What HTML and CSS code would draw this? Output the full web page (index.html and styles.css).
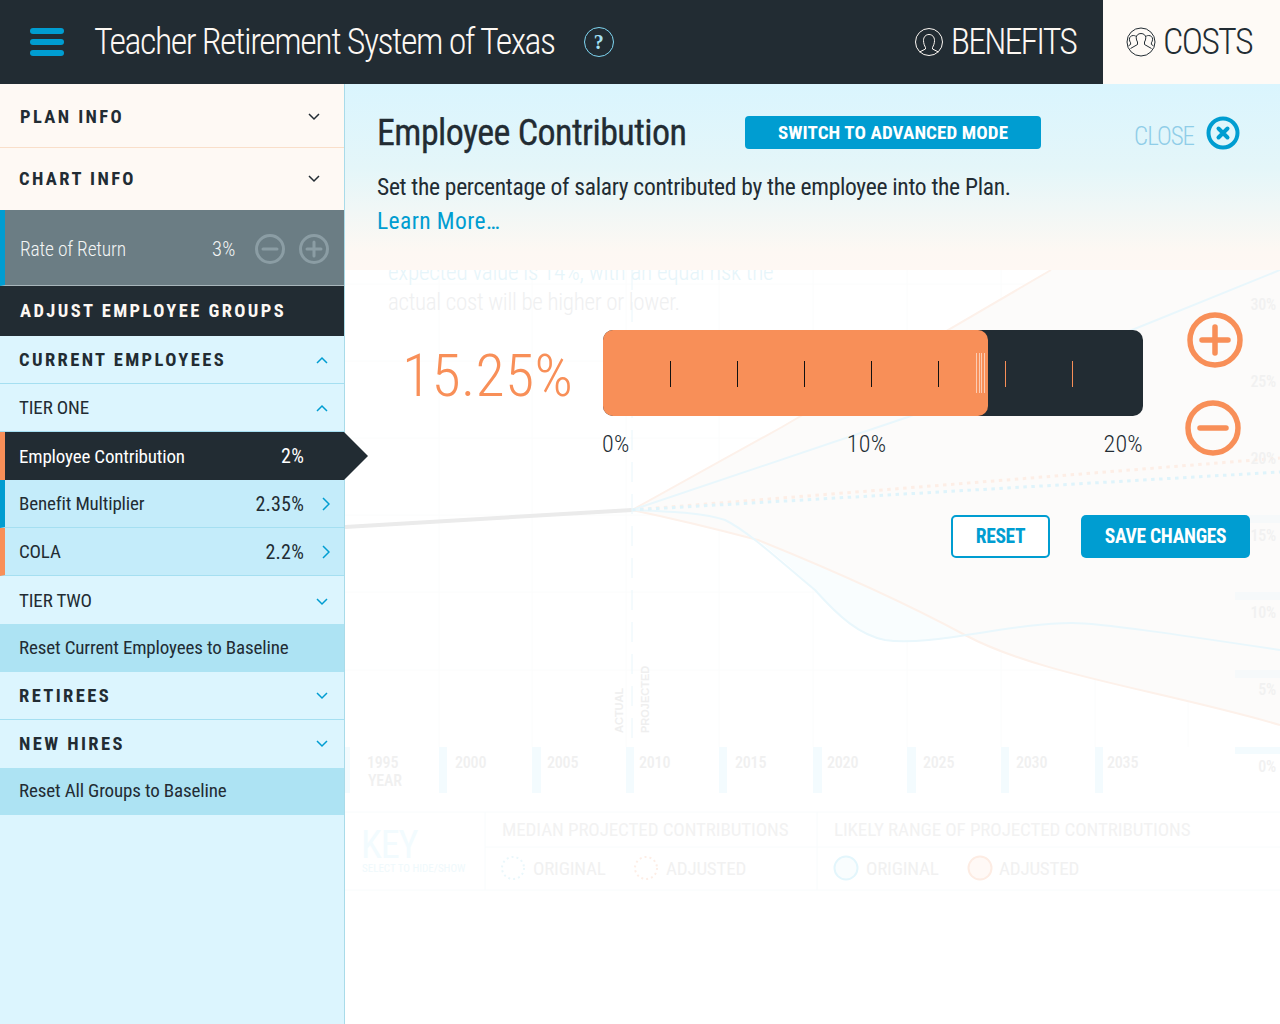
FILE: index.html
```html
<!DOCTYPE html>
<html lang="en">
<head>
<meta charset="utf-8">
<title>Teacher Retirement System of Texas</title>
<link rel="stylesheet" href="styles.css">
</head>
<body>
<header class="topbar">
  <div class="burger"><span></span><span></span><span></span></div>
  <h1 class="brand">Teacher Retirement System of Texas</h1>
  <div class="help">?</div>
  <div class="topbar-space"></div>
  <div class="tab tab-benefits">
    <svg class="tab-icon" viewBox="0 0 28 28"><circle cx="14" cy="14" r="13.500"/><path d="M10.500 19.500c-1-2-2-4-2-7 0-3.500 2.200-6 5.500-6s5.500 2.500 5.500 6c0 3-1 5-2 7v1.500l6 3M10.500 19.500v1.500l-6 3"/></svg>
    <span>BENEFITS</span>
  </div>
  <div class="tab tab-costs">
    <svg class="tab-icon" viewBox="0 0 30 30"><circle cx="15" cy="15" r="14"/><path d="M11.500 15c-.8-1.300-1.300-2.700-1.300-4.200 0-2.500 2-4.300 4.800-4.300s4.800 1.800 4.800 4.300c0 1.500-.5 2.900-1.300 4.200v2.500l7 4M11.500 15v2.500l-7 4M9.800 9.200C9 8.700 8.200 8.500 7.300 8.500c-2.300 0-3.900 1.600-3.900 3.700 0 1.400.5 2.600 1.200 3.600v1.700l-2 1.200M20.200 9.200c.8-.5 1.600-.7 2.500-.7 2.300 0 3.900 1.600 3.900 3.700 0 1.400-.5 2.600-1.200 3.600v1.700l2 1.200"/></svg>
    <span>COSTS</span>
  </div>
</header>
<div class="layout">
  <aside class="side">
    <div class="row cream cream-line plan"><span class="head">PLAN INFO</span><svg class="chev dark" viewBox="0 0 12 8"><path d="M1 1l5 5 5-5"/></svg></div>
    <div class="row cream chart-info"><span class="head">CHART INFO</span><svg class="chev dark" viewBox="0 0 12 8"><path d="M1 1l5 5 5-5"/></svg></div>
    <div class="rate">
      <span class="rate-label">Rate of Return</span>
      <span class="rate-val">3%</span>
      <svg class="rate-btn" viewBox="0 0 32 32"><circle cx="16" cy="16" r="13.500"/><path d="M9 16h14"/></svg>
      <svg class="rate-btn" viewBox="0 0 32 32"><circle cx="16" cy="16" r="13.500"/><path d="M9 16h14M16 9v14"/></svg>
    </div>
    <div class="adjust">ADJUST EMPLOYEE GROUPS</div>
    <div class="row lined"><span class="head">CURRENT EMPLOYEES</span><svg class="chev blue" viewBox="0 0 12 8"><path d="M1 7l5-5 5 5"/></svg></div>
    <div class="row lined"><span class="sub">TIER ONE</span><svg class="chev blue" viewBox="0 0 12 8"><path d="M1 7l5-5 5 5"/></svg></div>
    <div class="item active"><span class="item-label">Employee Contribution</span><span class="item-val">2%</span></div>
    <div class="item mark-blue"><span class="item-label">Benefit Multiplier</span><span class="item-val">2.35%</span><svg class="chev-r" viewBox="0 0 8 14"><path d="M1 1l6 6-6 6"/></svg></div>
    <div class="item mark-orange"><span class="item-label">COLA</span><span class="item-val">2.2%</span><svg class="chev-r" viewBox="0 0 8 14"><path d="M1 1l6 6-6 6"/></svg></div>
    <div class="row"><span class="sub">TIER TWO</span><svg class="chev blue chev-low" viewBox="0 0 12 8"><path d="M1 1l5 5 5-5"/></svg></div>
    <div class="row reset-row"><span class="sub">Reset Current Employees to Baseline</span></div>
    <div class="row lined"><span class="head">RETIREES</span><svg class="chev blue" viewBox="0 0 12 8"><path d="M1 1l5 5 5-5"/></svg></div>
    <div class="row"><span class="head">NEW HIRES</span><svg class="chev blue" viewBox="0 0 12 8"><path d="M1 1l5 5 5-5"/></svg></div>
    <div class="row reset-row reset-last"><span class="sub">Reset All Groups to Baseline</span></div>
  </aside>

  <main class="stage">
    <svg class="chart" viewBox="345 84 935 940">
      <g class="grid">
        <path d="M345 284H1280M345 361H1280M345 438H1280M345 515H1280M345 592H1280M345 670H1280"/>
        <path d="M439 270V747M532 270V747M626 270V747M719 270V747M813 270V747M907 270V747M1001 270V747M1095 270V747M1188 270V747"/>
      </g>
      <path class="range-orange" d="M632 510L782 427L1051 270H1280V725C1160 690 1040 675 965 635C900 600 820 565 758 540C720 530 680 520 632 510Z"/>
      <path class="range-blue" d="M758 540C780 558 800 575 815 590C840 618 860 635 885 640C915 645 940 638 965 635C900 600 810 560 758 540Z"/>
      <path class="line-orange" d="M632 510L782 427L1051 270"/>
      <path class="line-blue" d="M632 510L908 417L1132 330L1280 270"/>
      <path class="line-orange" d="M632 510C680 520 720 530 758 540C820 565 900 600 965 635C1040 675 1160 690 1280 725"/>
      <path class="line-blue" d="M632 510C680 512 705 513 725 520C750 532 790 570 815 590C840 618 860 635 885 640C930 647 1010 623 1072 623C1100 623 1180 635 1280 650"/>
      <path class="dots-orange" d="M632 510L1280 458"/>
      <path class="dots-blue" d="M632 510L1280 472"/>
      <path class="line-actual" d="M345 527L632 510"/>
      <path class="dash" d="M632 270V747"/>
      <g class="year-bars">
        <path d="M345 747h5v46h-5zM439 747h8v46h-8zM532 747h9v46h-9zM626 747h8v46h-8zM719 747h8v46h-8zM813 747h9v46h-9zM907 747h9v46h-9zM1001 747h8v46h-8zM1095 747h8v46h-8z"/>
        <path d="M1235 747h45v7h-45z"/>
      </g>
      <path class="tick-bars" d="M1235 670h45v8h-45zM1235 592h45v8h-45zM1235 515h45v8h-45z"/>
      <g class="chart-note">
        <text x="388" y="280">expected value is 14%, with an equal risk the</text>
        <text x="388" y="310">actual cost will be higher or lower.</text>
      </g>
      <g class="axis-r">
        <text x="1276" y="310">30%</text><text x="1276" y="387">25%</text><text x="1276" y="464">20%</text><text x="1276" y="541">15%</text><text x="1276" y="618">10%</text><text x="1276" y="695">5%</text><text x="1276" y="772">0%</text>
      </g>
      <g class="axis-x">
        <text x="367" y="768">1995</text><text x="368" y="786">YEAR</text><text x="455" y="768">2000</text><text x="547" y="768">2005</text><text x="639" y="768">2010</text><text x="735" y="768">2015</text><text x="827" y="768">2020</text><text x="923" y="768">2025</text><text x="1016" y="768">2030</text><text x="1107" y="768">2035</text>
      </g>
      <text class="rot" transform="translate(623 733) rotate(-90)">ACTUAL</text>
      <text class="rot" transform="translate(649 733) rotate(-90)">PROJECTED</text>
      <g class="key">
        <path class="key-line" d="M345 812H1280M485 847H1280M345 890H1280M485 812V890M817 812V890"/>
        <text class="key-title" x="361" y="858">KEY</text>
        <text class="key-sub" x="362" y="872">SELECT TO HIDE/SHOW</text>
        <text class="key-head" x="502" y="836">MEDIAN PROJECTED CONTRIBUTIONS</text>
        <text class="key-head" x="834" y="836">LIKELY RANGE OF PROJECTED CONTRIBUTIONS</text>
        <circle class="k-dot-b" cx="513" cy="868" r="11"/>
        <text class="key-item" x="533" y="875">ORIGINAL</text>
        <circle class="k-dot-o" cx="646" cy="868" r="11"/>
        <text class="key-item" x="666" y="875">ADJUSTED</text>
        <circle class="k-b" cx="846" cy="868" r="11.500"/>
        <text class="key-item" x="866" y="875">ORIGINAL</text>
        <circle class="k-o" cx="980" cy="868" r="11.500"/>
        <text class="key-item" x="999" y="875">ADJUSTED</text>
      </g>
    </svg>

    <section class="panel">
      <div class="panel-top">
        <h2 class="panel-title">Employee Contribution</h2>
        <div class="mode-btn">SWITCH TO ADVANCED MODE</div>
        <div class="close">
          <span class="close-label">CLOSE</span>
          <svg class="close-icon" viewBox="0 0 34 34"><circle cx="17" cy="17" r="14.500"/><path d="M12.500 12.500l9 9M21.500 12.500l-9 9"/></svg>
        </div>
      </div>
      <p class="panel-text">Set the percentage of salary contributed by the employee into the Plan.</p>
      <p class="panel-link">Learn More…</p>
    </section>

    <section class="editor">
      <div class="value">15.25%</div>
      <div class="slider">
        <div class="track">
          <div class="fill" style="width:385px"></div>
          <div class="ticks">
            <i class="tk"></i><i class="tk"></i><i class="tk"></i><i class="tk"></i><i class="tk"></i><i class="tk tk-o"></i><i class="tk tk-o"></i>
          </div>
          <div class="grip"><i></i><i></i><i></i><i></i></div>
        </div>
        <div class="scale"><span>0%</span><span>10%</span><span>20%</span></div>
      </div>
      <div class="steps">
        <svg class="step step-plus" viewBox="0 0 56 56"><circle cx="28" cy="28" r="25"/><path d="M15 28h26M28 15v26"/></svg>
        <svg class="step step-minus" viewBox="0 0 56 56"><circle cx="28" cy="28" r="25"/><path d="M15 28h26"/></svg>
      </div>
    </section>
    <div class="actions">
      <div class="btn btn-line">RESET</div>
      <div class="btn btn-fill">SAVE CHANGES</div>
    </div>
  </main>
</div>
</body>
</html>
```
FILE: styles.css
```css
* { box-sizing: border-box; }
html, body { margin: 0; height: 1024px; overflow: hidden; }
body {
  background: #fff;
  color: #222c33;
  font-family: Roboto, "Liberation Sans", sans-serif;
  font-stretch: 75%;
}
h1, h2, p { margin: 0; font-weight: 400; }

.topbar { display: flex; align-items: center; height: 84px; background: #222c33; color: #fdf8f3; }
.burger { display: flex; flex-direction: column; gap: 5.500px; width: 34px; margin-left: 30px; }
.burger span { height: 5.500px; border-radius: 3px; background: #009dd1; }
.brand { margin-left: 30px; font-size: 36px; font-weight: 300; letter-spacing: -1.480px; line-height: 84px; white-space: nowrap; }
.help {
  flex: none; width: 30px; height: 30px; margin-left: 29px; border: 1px solid #7fd6f2; border-radius: 50%;
  color: #a5e2f6; font: 700 20px/28px "Liberation Serif", serif; text-align: center;
}
.topbar-space { flex: 1; }
.tab { display: flex; flex: none; align-items: center; height: 84px; padding-bottom: 1px; font-size: 36px; font-weight: 300; }
.tab-benefits { padding-right: 27px; gap: 8px; letter-spacing: -1.900px; }
.tab-costs { width: 177px; padding-left: 23px; gap: 7px; background: #fefaf6; color: #222c33; letter-spacing: -1.700px; }
.tab-icon { flex: none; width: 28px; height: 28px; fill: none; stroke: currentColor; stroke-width: 1; }
.tab-costs .tab-icon { width: 30px; height: 30px; }

.layout { display: flex; height: 940px; }
.side { position: relative; z-index: 2; flex: none; width: 345px; background: #dcf5fe; border-right: 1px solid #a9dbe9; }

.row { display: flex; align-items: center; justify-content: space-between; height: 48px; padding: 0 16px 0 19px; }
.lined { border-bottom: 1px solid #a5dff1; }
.cream { background: #fef9f4; padding-right: 24px; }
.plan { height: 64px; padding-top: 2px; padding-left: 20px; }
.chart-info { height: 62px; }
.cream-line { border-bottom: 1px solid #f9dfca; }
.head { font-size: 18.500px; font-weight: 700; letter-spacing: 2.400px; white-space: nowrap; }
.sub { font-size: 19px; letter-spacing: -.15px; white-space: nowrap; }
.reset-row { background: #ade3f3; padding-bottom: 2px; }
.reset-last { height: 47px; }
.chev { width: 12px; height: 8px; fill: none; stroke-width: 1.500; }
.chev.dark { stroke: #222c33; }
.chev.blue { stroke: #009dd1; }
.chev-low { margin-top: 4px; }
.chev-r { width: 8px; height: 14px; margin-left: 18px; fill: none; stroke: #009dd1; stroke-width: 1.500; }

.rate {
  display: flex; align-items: center; height: 76px; padding: 2px 0 0 15px;
  background: #6b7d84; border-left: 5px solid #009dd1; border-bottom: 1px solid #a8b6bb; color: #f3f5f5;
  font-size: 19.500px; font-weight: 300; letter-spacing: -.2px;
}
.rate-label { width: 192px; padding-top: 1px; white-space: nowrap; }
.rate-val { width: 25px; font-size: 20.500px; letter-spacing: .3px; }
.rate-btn { flex: none; width: 32px; height: 32px; margin-left: 12px; fill: none; stroke: #8b9da4; stroke-width: 3; stroke-linecap: round; }
.rate-val + .rate-btn { margin-left: 17px; }

.adjust {
  display: flex; align-items: center; height: 50px; padding-left: 20px; white-space: nowrap;
  background: #222c33; color: #fdf8f3; font-size: 18.500px; font-weight: 700; letter-spacing: 2.400px;
}

.item { position: relative; display: flex; align-items: center; height: 48px; padding-left: 14px; background: #c4ecfa; border-left: 5px solid #f88f58; border-bottom: 1px solid #a5dff1; font-size: 19px; letter-spacing: -.17px; white-space: nowrap; }
.item-label { width: 225px; }
.item-val { width: 60px; font-size: 20px; letter-spacing: .2px; text-align: right; }
.mark-blue { border-left-color: #009dd1; }
.active { background: #222c33; color: #fff; border-bottom: 0; }
.active::after {
  content: ""; position: absolute; left: 339px; top: 0; width: 0; height: 0;
  border-left: 24px solid #222c33; border-top: 24px solid transparent; border-bottom: 24px solid transparent;
}

.stage { position: relative; flex: 1; min-width: 0; }
.chart { position: absolute; left: 0; top: 0; width: 935px; height: 940px; }
.grid path { fill: none; stroke: #fbfcfc; stroke-width: 1; }
.range-orange { fill: #fcfbfa; }
.range-blue { fill: #f9fdfe; }
.line-orange { fill: none; stroke: #fdf1ea; stroke-width: 2; }
.line-blue { fill: none; stroke: #e9f7fc; stroke-width: 2; }
.line-actual { fill: none; stroke: #ebebeb; stroke-width: 4; }
.dots-orange { fill: none; stroke: #fdeee6; stroke-width: 3; stroke-dasharray: 3.500 4.500; }
.dots-blue { fill: none; stroke: #dff4fb; stroke-width: 3; stroke-dasharray: 3.500 4.500; }
.dash { fill: none; stroke: #e9f6fb; stroke-width: 1; stroke-dasharray: 20 12; }
.year-bars path { fill: #f3fbfe; }
.tick-bars { fill: #f6f9fa; }
.chart-note text { font-size: 23px; font-weight: 300; letter-spacing: -.3px; fill: #eff0f1; }
.chart-note text:first-child { fill: #e6f5fa; letter-spacing: -.2px; }
.axis-r text { font-size: 16px; font-weight: 500; letter-spacing: -.2px; fill: #f1f1f1; text-anchor: end; }
.axis-x text { font-size: 16px; font-weight: 500; letter-spacing: -.2px; fill: #f0f0f0; }
.rot { font-family: "Liberation Sans", sans-serif; font-size: 11px; font-weight: 700; fill: #efefef; }
.key-line { fill: none; stroke: #f8fbfc; stroke-width: 1; }
.key-title { font-size: 38px; letter-spacing: -1px; fill: #f2fbfe; }
.key-sub { font-size: 11px; fill: #eff9fc; }
.key-head { font-size: 19px; letter-spacing: -.1px; fill: #f2f2f2; }
.key-item { font-size: 19px; letter-spacing: -.2px; fill: #f1f1f1; }
.k-dot-b { fill: none; stroke: #eaf7fb; stroke-width: 2; stroke-dasharray: 2 3; }
.k-dot-o { fill: none; stroke: #fdeee6; stroke-width: 2; stroke-dasharray: 2 3; }
.k-b { fill: #f9fdfe; stroke: #e3f6fc; stroke-width: 2; }
.k-o { fill: #fff9f6; stroke: #fdece3; stroke-width: 2; }

.panel {
  position: relative; height: 186px; padding: 26px 0 0 32px;
  background: linear-gradient(#daf5fe 0%, #e4f6f9 45%, #fdf8f3 90%, #fef8f3 100%);
}
.panel-top { display: flex; align-items: center; height: 42px; }
.panel-title { flex: none; width: 368px; padding-top: 3px; font-size: 36px; font-weight: 400; letter-spacing: -.55px; -webkit-text-stroke: .3px #222c33; white-space: nowrap; }
.mode-btn {
  display: flex; flex: none; align-items: center; justify-content: center; width: 296px; height: 33px; margin-top: 3px;
  border-radius: 4px; background: #009dd1; color: #fff; font-size: 19px; font-weight: 700; letter-spacing: .1px; white-space: nowrap;
}
.close { display: flex; flex: none; align-items: center; gap: 12px; margin: 3px 0 0 93px; color: #8fcde8; font-size: 25px; font-weight: 300; letter-spacing: -1px; }
.close-label { padding-top: 7px; }
.close-icon { width: 34px; height: 34px; fill: none; stroke: #009dd1; stroke-width: 4; stroke-linecap: round; }
.panel-text { margin-top: 18px; font-size: 23.500px; line-height: 34px; font-weight: 400; letter-spacing: -.3px; white-space: nowrap; }
.panel-link { color: #009dd1; font-size: 23.500px; line-height: 34px; font-weight: 400; letter-spacing: .4px; white-space: nowrap; }

.editor { position: relative; display: flex; padding: 60px 0 0 57px; }
.value { flex: none; width: 201px; height: 86px; color: #f88f58; font-size: 60px; font-weight: 300; letter-spacing: .3px; line-height: 92px; }
.slider { flex: none; width: 540px; }
.track { position: relative; height: 86px; border-radius: 10px; background: #222c33; overflow: hidden; }
.fill { position: absolute; left: 0; top: 0; height: 86px; border-radius: 0 10px 10px 0; background: #f88f58; }
.ticks { position: absolute; left: 0; top: 31px; display: flex; gap: 66px; padding-left: 67px; }
.tk { width: 1px; height: 26px; background: #111; }
.tk-o { background: #f88f58; }
.grip { position: absolute; left: 373px; top: 23px; display: flex; gap: 1.500px; }
.grip i { width: 1px; height: 40px; background: rgba(255,255,255,.55); }
.scale { display: flex; justify-content: space-between; margin: 13px 0 0 -1px; font-size: 24px; font-weight: 300; letter-spacing: .3px; line-height: 30px; }
.steps { display: flex; flex-direction: column; gap: 32px; margin: -18px 0 0 42px; }
.step { display: block; width: 56px; height: 56px; fill: none; stroke: #f88f58; stroke-width: 5.500; stroke-linecap: round; }
.step-plus { margin-left: 2px; }

.actions { position: relative; display: flex; justify-content: flex-end; gap: 31px; margin-top: 56px; padding-right: 30px; }
.btn { display: flex; align-items: center; justify-content: center; height: 43px; border-radius: 5px; font-size: 19.500px; font-weight: 700; letter-spacing: -.3px; }
.btn-line { width: 99px; border: 2px solid #009dd1; background: #fff; color: #009dd1; }
.btn-fill { width: 169px; background: #009dd1; color: #fff; }
```
